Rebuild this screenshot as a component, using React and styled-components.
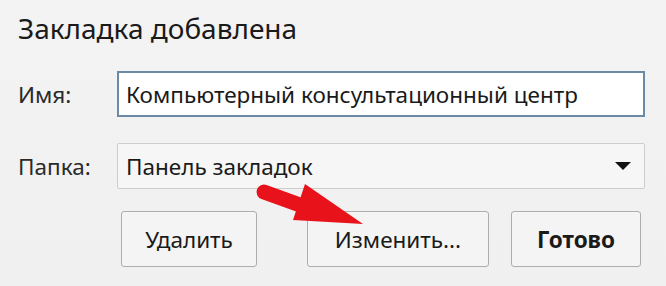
import React from "react";
import styled, { createGlobalStyle } from "styled-components";

const GlobalStyle = createGlobalStyle`
  html, body {
    margin: 0;
    padding: 0;
    background: #f2f2f2;
  }
  body {
    font-family: "Noto Sans", "Open Sans", sans-serif;
    color: #1c1c1c;
  }
`;

const Dialog = styled.div`
  position: relative;
  box-sizing: border-box;
  width: 666px;
  height: 286px;
  padding: 10px 21px 0 18px;
  background: linear-gradient(to bottom, #f3f3f3, #f0f0f0);
  overflow: hidden;
`;

const Title = styled.h1`
  margin: 0 0 25px;
  font-size: 28px;
  font-weight: 400;
  line-height: 36px;
  color: #1a1a1a;
`;

const Form = styled.div`
  display: grid;
  grid-template-columns: 99px 1fr;
  row-gap: 26px;
  align-items: center;
`;

const Label = styled.label`
  font-size: 22.5px;
  color: #2a2a2a;
`;

const TextInput = styled.div`
  box-sizing: border-box;
  height: 46px;
  display: flex;
  align-items: center;
  padding-left: 7px;
  background: #ffffff;
  border: 2px solid #6b8aa5;
  font-size: 22.5px;
  color: #1a1a1a;
  white-space: nowrap;
`;

const Select = styled.div`
  box-sizing: border-box;
  height: 46px;
  display: flex;
  align-items: center;
  justify-content: space-between;
  padding: 0 13px 0 8px;
  background: #f6f6f6;
  border: 1px solid #cdcdcd;
  border-radius: 2px;
  font-size: 22.5px;
  color: #1a1a1a;
`;

const Caret = styled.span`
  width: 0;
  height: 0;
  border-left: 8px solid transparent;
  border-right: 8px solid transparent;
  border-top: 8px solid #111;
`;

const Actions = styled.div`
  display: flex;
  margin-top: 22px;
  padding-left: 103px;
`;

const Button = styled.button`
  box-sizing: border-box;
  width: ${(p) => p.$width}px;
  height: 56px;
  margin-left: ${(p) => p.$offset || 0}px;
  padding: 0;
  background: #f4f4f4;
  border: 1px solid #adadad;
  border-radius: 3px;
  font-family: "Noto Sans", "Open Sans", sans-serif;
  font-size: 22.5px;
  font-weight: ${(p) => (p.$primary ? 700 : 400)};
  color: #1a1a1a;
  cursor: pointer;
`;

const Arrow = styled.svg`
  position: absolute;
  left: 250px;
  top: 178px;
  width: 120px;
  height: 52px;
  pointer-events: none;
`;

export default function App() {
  return (
    <>
      <GlobalStyle />
      <Dialog>
        <Title>Закладка добавлена</Title>
        <Form>
          <Label>Имя:</Label>
          <TextInput>Компьютерный консультационный центр</TextInput>
          <Label>Папка:</Label>
          <Select>
            <span>Панель закладок</span>
            <Caret />
          </Select>
        </Form>
        <Actions>
          <Button $width={136}>Удалить</Button>
          <Button $width={182} $offset={50}>Изменить...</Button>
          <Button $width={130} $offset={22} $primary>Готово</Button>
        </Actions>
        <Arrow viewBox="0 0 120 52">
          <line x1="14" y1="14" x2="50" y2="27" stroke="#e8121a" strokeWidth="15" strokeLinecap="round" />
          <polygon points="55,6 43,42 113,46" fill="#e8121a" />
        </Arrow>
      </Dialog>
    </>
  );
}
